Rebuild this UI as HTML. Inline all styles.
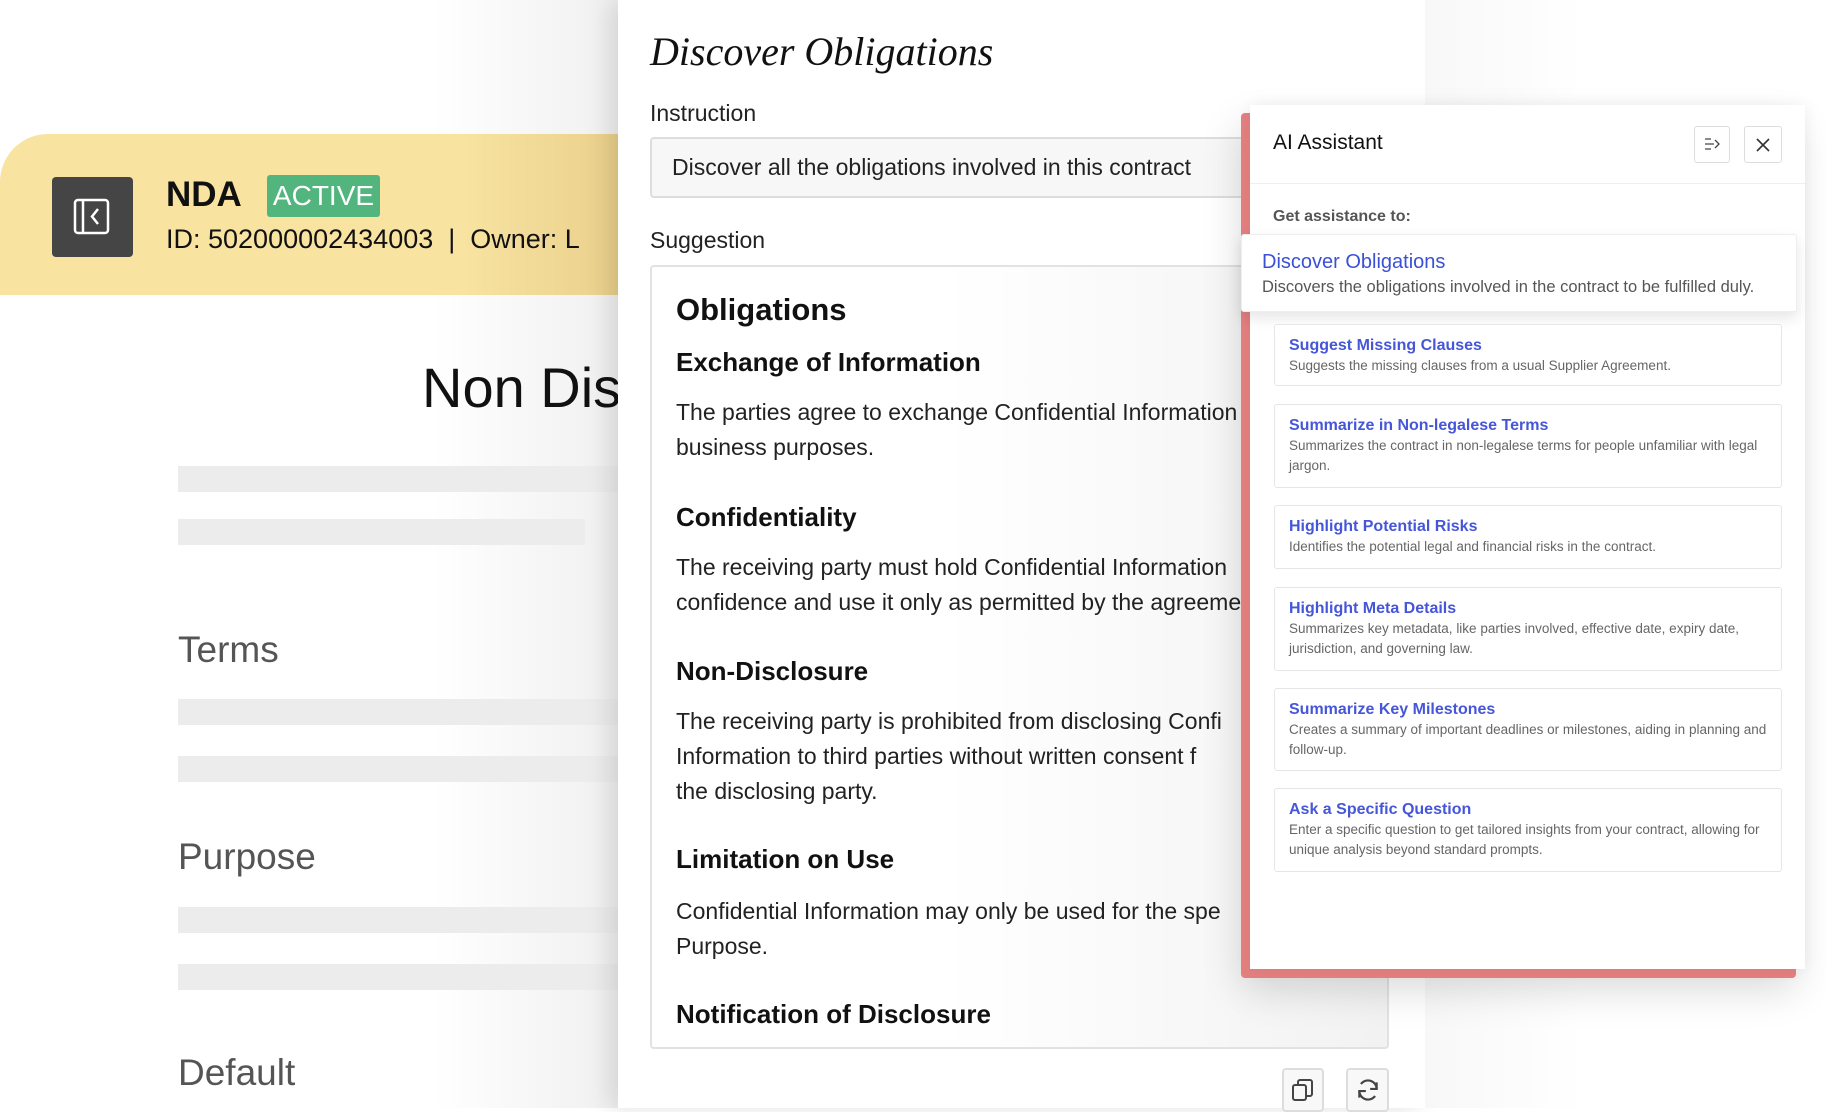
<!DOCTYPE html>
<html><head><meta charset="utf-8"><style>
*{margin:0;padding:0;box-sizing:border-box}
body{width:1826px;height:1108px;overflow:hidden;background:#fff;font-family:"Liberation Sans",sans-serif;position:relative}
.a{position:absolute;white-space:nowrap}
.bar{position:absolute;background:#ececec;height:26px}
.card{position:absolute;left:1274px;width:508px;border:1px solid #e6e6e6;border-radius:3px;background:#fff;padding:11px 14px 0 14px}
.card .t{color:#4656d9;font-weight:bold;font-size:16px;line-height:20px}
.card .d{color:#666;font-size:13.5px;line-height:20px;white-space:normal}
.h{font-weight:bold;color:#111}
.p{font-size:23px;color:#222;line-height:35px}
</style></head><body>
<div class="a" style="left:0;top:0;width:618px;height:1108px;background:linear-gradient(90deg,#fff 0%,#fff 70%,#f0f0f0 100%)"></div>
<div class="a" style="left:0;top:134px;width:618px;height:161px;background:linear-gradient(90deg,#f8e3a1 0%,#f8e3a1 75%,#ead08c 100%);border-top-left-radius:48px;overflow:hidden">
<div class="a" style="left:166px;top:90px;font-size:27px;color:#111">ID: 502000002434003 &nbsp;|&nbsp; Owner: L</div></div>
<div class="a" style="left:52px;top:177px;width:81px;height:80px;background:#454545;border-radius:4px"></div>
<svg class="a" style="left:72px;top:197px" width="40" height="40" viewBox="0 0 40 40"><rect x="3" y="3" width="33" height="33" rx="3" fill="none" stroke="#fff" stroke-width="2.5"/><line x1="11" y1="3" x2="11" y2="36" stroke="#fff" stroke-width="2.5"/><path d="M26 12 L20 19.5 L26 27" fill="none" stroke="#fff" stroke-width="2.5"/></svg>
<div class="a" style="left:166px;top:175px;font-size:35px;font-weight:bold;color:#111">NDA</div>
<div class="a" style="left:267px;top:175px;width:113px;height:42px;background:#52b57e;border-radius:3px;color:#fff;font-size:28px;line-height:42px;text-align:center">ACTIVE</div>
<div class="a" style="left:422px;top:355px;font-size:56px;color:#111">Non Dis</div>
<div class="bar" style="left:178px;top:466px;width:440px"></div>
<div class="bar" style="left:178px;top:519px;width:407px"></div>
<div class="a" style="left:178px;top:629px;font-size:37px;color:#555">Terms</div>
<div class="bar" style="left:178px;top:699px;width:440px"></div>
<div class="bar" style="left:178px;top:756px;width:440px"></div>
<div class="a" style="left:178px;top:836px;font-size:37px;color:#555">Purpose</div>
<div class="bar" style="left:178px;top:907px;width:440px"></div>
<div class="bar" style="left:178px;top:964px;width:440px"></div>
<div class="a" style="left:178px;top:1052px;font-size:37px;color:#555">Default</div>
<div class="a" style="left:618px;top:0;width:807px;height:1108px;background:#fff;box-shadow:-8px 0 24px rgba(0,0,0,.12)"></div>
<div class="a" style="left:1425px;top:0;width:401px;height:1108px;background:linear-gradient(90deg,#f8f8f8,#fff 40%)"></div>
<div class="a" style="left:650px;top:28px;font-size:40px;font-style:italic;font-family:'Liberation Serif',serif;color:#111">Discover Obligations</div>
<div class="a" style="left:650px;top:100px;font-size:23px;color:#222">Instruction</div>
<div class="a" style="left:650px;top:137px;width:800px;height:61px;border:2px solid #ddd;border-radius:4px;background:#f7f7f7;padding-left:20px;font-size:23px;line-height:57px;color:#222">Discover all the obligations involved in this contract</div>
<div class="a" style="left:650px;top:227px;font-size:23px;color:#222">Suggestion</div>
<div class="a" style="left:650px;top:265px;width:739px;height:784px;border:2px solid #e2e2e2;border-radius:4px;background:linear-gradient(90deg,#fff 40%,#f2f2f2 100%)"></div>
<div class="a h" style="left:676px;top:292px;font-size:31px">Obligations</div>
<div class="a h" style="left:676px;top:347px;font-size:26px">Exchange of Information</div>
<div class="a p" style="left:676px;top:395px">The parties agree to exchange Confidential Information<br>business purposes.</div>
<div class="a h" style="left:676px;top:502px;font-size:26px">Confidentiality</div>
<div class="a p" style="left:676px;top:550px">The receiving party must hold Confidential Information<br>confidence and use it only as permitted by the agreement</div>
<div class="a h" style="left:676px;top:656px;font-size:26px">Non-Disclosure</div>
<div class="a p" style="left:676px;top:704px">The receiving party is prohibited from disclosing Confi<br>Information to third parties without written consent f<br>the disclosing party.</div>
<div class="a h" style="left:676px;top:844px;font-size:26px">Limitation on Use</div>
<div class="a p" style="left:676px;top:894px">Confidential Information may only be used for the spe<br>Purpose.</div>
<div class="a h" style="left:676px;top:999px;font-size:26px">Notification of Disclosure</div>
<div class="a" style="left:1282px;top:1068px;width:42px;height:44px;border:2px solid #ddd;border-radius:4px;background:#f8f8f8"></div>
<svg class="a" style="left:1291px;top:1078px" width="24" height="24" viewBox="0 0 24 24"><rect x="2" y="7" width="13" height="15" rx="2" fill="none" stroke="#444" stroke-width="2"/><path d="M7 7V4a2 2 0 0 1 2-2h10a2 2 0 0 1 2 2v12a2 2 0 0 1-2 2h-4" fill="none" stroke="#444" stroke-width="2"/></svg>
<div class="a" style="left:1346px;top:1068px;width:43px;height:44px;border:2px solid #ddd;border-radius:4px;background:#f8f8f8"></div>
<svg class="a" style="left:1355px;top:1077px" width="26" height="26" viewBox="0 0 24 24"><path d="M20 11A8 8 0 0 0 5.5 6.5M4 13a8 8 0 0 0 14.5 4.5" fill="none" stroke="#444" stroke-width="2"/><path d="M20 5v6h-6" fill="none" stroke="#444" stroke-width="2"/><path d="M4 19v-6h6" fill="none" stroke="#444" stroke-width="2"/></svg>
<div class="a" style="left:1241px;top:113px;width:555px;height:865px;background:#e57f7f;border-radius:4px;box-shadow:0 12px 40px rgba(0,0,0,.15)"></div>
<div class="a" style="left:1250px;top:105px;width:555px;height:864px;background:#fff;box-shadow:0 0 14px rgba(0,0,0,.06)"></div>
<div class="a" style="left:1273px;top:131px;font-size:21px;color:#111">AI Assistant</div>
<div class="a" style="left:1694px;top:126px;width:36px;height:37px;border:1px solid #ddd;border-radius:3px"></div>
<svg class="a" style="left:1702px;top:134px" width="20" height="20" viewBox="0 0 20 20"><path d="M3 5h6M3 10h9M3 15h6M13 6l4 4-4 4" fill="none" stroke="#444" stroke-width="1.3"/></svg>
<div class="a" style="left:1744px;top:126px;width:38px;height:37px;border:1px solid #ddd;border-radius:3px"></div>
<svg class="a" style="left:1755px;top:137px" width="16" height="16" viewBox="0 0 16 16"><path d="M2 2L14 14M14 2L2 14" stroke="#333" stroke-width="1.6"/></svg>
<div class="a" style="left:1250px;top:183px;width:555px;height:1px;background:#eee"></div>
<div class="a" style="left:1273px;top:208px;font-size:16px;font-weight:bold;color:#555">Get assistance to:</div>
<div class="a" style="left:1241px;top:234px;width:556px;height:78px;background:#fff;border:1px solid #eee;border-radius:3px;box-shadow:0 6px 14px rgba(0,0,0,.1)"></div>
<div class="a" style="left:1262px;top:251px;font-size:20px;color:#3a50d6">Discover Obligations</div>
<div class="a" style="left:1262px;top:278px;font-size:16.5px;color:#555">Discovers the obligations involved in the contract to be fulfilled duly.</div>
<div class="card" style="top:324px;height:62px"><div class="t">Suggest Missing Clauses</div><div class="d">Suggests the missing clauses from a usual Supplier Agreement.</div></div>
<div class="card" style="top:404px;height:84px"><div class="t">Summarize in Non-legalese Terms</div><div class="d">Summarizes the contract in non-legalese terms for people unfamiliar with legal jargon.</div></div>
<div class="card" style="top:505px;height:64px"><div class="t">Highlight Potential Risks</div><div class="d">Identifies the potential legal and financial risks in the contract.</div></div>
<div class="card" style="top:587px;height:84px"><div class="t">Highlight Meta Details</div><div class="d">Summarizes key metadata, like parties involved, effective date, expiry date, jurisdiction, and governing law.</div></div>
<div class="card" style="top:688px;height:83px"><div class="t">Summarize Key Milestones</div><div class="d">Creates a summary of important deadlines or milestones, aiding in planning and follow-up.</div></div>
<div class="card" style="top:788px;height:84px"><div class="t">Ask a Specific Question</div><div class="d">Enter a specific question to get tailored insights from your contract, allowing for unique analysis beyond standard prompts.</div></div>
</body></html>
